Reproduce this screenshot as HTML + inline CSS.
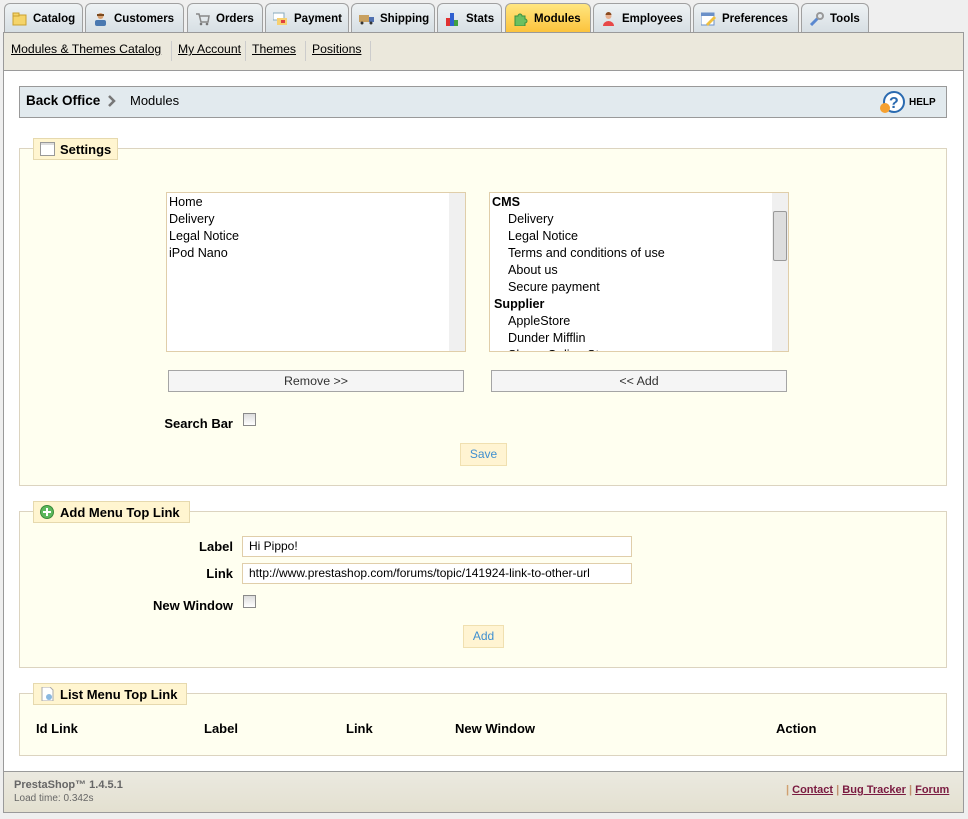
<!DOCTYPE html>
<html><head><meta charset="utf-8">
<style>
*{box-sizing:border-box;margin:0;padding:0}
body{width:968px;height:819px;background:#efefef;font-family:"Liberation Sans",Arial,sans-serif;font-size:12px;color:#000;position:relative;overflow:hidden}
.abs{position:absolute}
.tab{position:absolute;top:3px;height:30px;border:1px solid #a0a0a0;border-bottom:none;border-radius:6px 6px 0 0;background:linear-gradient(#eef2f4,#d6dee3);font-weight:bold;font-size:11.5px;line-height:30px;padding-left:28px;white-space:nowrap}
.tab .ic{position:absolute;left:7px;top:8px;width:15px;height:14px}
.tab.on{background:linear-gradient(#ffe680,#fcc23a);}
#main{position:absolute;left:3px;top:32px;width:961px;height:781px;border:1px solid #9a9a9a;background:#fff}
#sub{position:absolute;left:0;top:0;width:959px;height:38px;background:#ebe8dc;border-bottom:1px solid #9a9a9a}
#sub a{position:absolute;top:9px;color:#000;text-decoration:underline;font-size:12.2px}
.sep{position:absolute;top:8px;width:1px;height:20px;background:#ccc}
fieldset{position:absolute;border:1px solid #dcd4c0;background:#fffff0}
.lg{position:absolute;height:22px;background:#fff5d0;border:1px solid #e6d9ae;font-weight:bold;font-size:13px;line-height:21px;padding-left:26px}
.lg .ic{position:absolute;left:6px;top:3px;width:15px;height:14px}
.sel{position:absolute;background:#fff;border:1px solid #e0ceaa;font-size:12.6px;line-height:17px;overflow:hidden}
.sb{position:absolute;right:0;top:0;width:16px;height:100%;background:#f0f0f0}
.btn{position:absolute;border:1px solid #a5a5a5;background:#f5f5f5;text-align:center;font-size:12.4px;line-height:21px;color:#333}
.sbtn{position:absolute;background:#fff4d2;border:1px solid #f0e0b0;color:#3f8fd0;text-align:center;font-size:12px;line-height:21px}
.lbl{position:absolute;font-weight:bold;font-size:13px;text-align:right}
.cb{position:absolute;width:13px;height:13px;border:1px solid #8a8a8a;background:linear-gradient(#ddd,#fff)}
.inp{position:absolute;height:21px;border:1px solid #e0ceaa;background:#fff;font-size:12px;line-height:19px;padding-left:6px}
.th{position:absolute;top:722px;font-weight:bold;font-size:13px;line-height:14px}
</style></head><body>

<div class="tab" style="left:4px;width:79px"><svg class="ic" viewBox="0 0 15 14"><rect x="1" y="3" width="13" height="10" fill="#f5d46a" stroke="#c9a030"/><rect x="1" y="1" width="6" height="3" fill="#f5d46a" stroke="#c9a030"/></svg>Catalog</div>
<div class="tab" style="left:85px;width:99px"><svg class="ic" viewBox="0 0 15 14"><circle cx="7.5" cy="4" r="3" fill="#d9a070"/><path d="M4 2h7v2H4z" fill="#7a4a20"/><rect x="2" y="8" width="11" height="6" rx="2" fill="#4a78b0"/></svg>Customers</div>
<div class="tab" style="left:187px;width:76px"><svg class="ic" viewBox="0 0 15 14"><path d="M1 2h3l2 8h7l1-6H5" fill="none" stroke="#888" stroke-width="1.5"/><circle cx="6" cy="12" r="1.3" fill="#777"/><circle cx="12" cy="12" r="1.3" fill="#777"/></svg>Orders</div>
<div class="tab" style="left:265px;width:84px"><svg class="ic" viewBox="0 0 15 14"><rect x="0" y="1" width="11" height="7" fill="#fff" stroke="#8ab"/><rect x="4" y="6" width="10" height="7" fill="#f7d070"/><rect x="8" y="8" width="4" height="3" fill="#e04040"/></svg>Payment</div>
<div class="tab" style="left:351px;width:84px"><svg class="ic" viewBox="0 0 15 14"><rect x="0" y="3" width="10" height="7" fill="#c8a060"/><rect x="10" y="5" width="5" height="5" fill="#5070b0"/><circle cx="3" cy="11" r="1.5" fill="#333"/><circle cx="12" cy="11" r="1.5" fill="#333"/></svg>Shipping</div>
<div class="tab" style="left:437px;width:65px"><svg class="ic" viewBox="0 0 15 14"><rect x="1" y="6" width="4" height="8" fill="#e03030"/><rect x="5" y="1" width="4" height="13" fill="#3060d0"/><rect x="9" y="8" width="4" height="6" fill="#40a040"/></svg>Stats</div>
<div class="tab on" style="left:505px;width:86px"><svg class="ic" viewBox="0 0 15 14"><path d="M2 4h3a2 2 0 1 1 4 0h3v3a2 2 0 1 1 0 4v3H2z" fill="#6cc060" stroke="#3a9040"/></svg>Modules</div>
<div class="tab" style="left:593px;width:98px"><svg class="ic" viewBox="0 0 15 14"><circle cx="7.5" cy="4" r="3" fill="#e8b090"/><path d="M4.5 3a3 3 0 0 1 6 0z" fill="#8a4a20"/><path d="M2 14a5.5 5 0 0 1 11 0z" fill="#e84848"/></svg>Employees</div>
<div class="tab" style="left:693px;width:106px"><svg class="ic" viewBox="0 0 15 14"><rect x="0" y="1" width="13" height="12" fill="#fff" stroke="#6a90c8"/><rect x="0" y="1" width="13" height="3" fill="#6a90c8"/><path d="M5 12l8-8 2 2-8 8z" fill="#f0c040"/></svg>Preferences</div>
<div class="tab" style="left:801px;width:68px"><svg class="ic" viewBox="0 0 15 14"><path d="M2 13l7-7" stroke="#5a88d0" stroke-width="3"/><circle cx="11" cy="4" r="3" fill="none" stroke="#999" stroke-width="2"/></svg>Tools</div>

<div id="main">
 <div id="sub">
  <a style="left:7px">Modules &amp; Themes Catalog</a><div class="sep" style="left:167px"></div>
  <a style="left:174px">My Account</a><div class="sep" style="left:241px"></div>
  <a style="left:248px">Themes</a><div class="sep" style="left:301px"></div>
  <a style="left:308px">Positions</a><div class="sep" style="left:366px"></div>
 </div>
</div>

<div class="abs" style="left:19px;top:86px;width:928px;height:32px;background:#e2eaee;border:1px solid #999"></div>
<div class="abs" style="left:26px;top:93px;font-size:13.5px;font-weight:bold">Back Office</div>
<svg class="abs" style="left:107px;top:94px" width="10" height="14" viewBox="0 0 10 14"><path d="M2 2l5 5-5 5" fill="none" stroke="#777" stroke-width="2.5"/></svg>
<div class="abs" style="left:130px;top:93px;font-size:13px">Modules</div>
<svg class="abs" style="left:879px;top:91px" width="28" height="24" viewBox="0 0 28 24"><circle cx="15" cy="11" r="10" fill="#fff" stroke="#2a6ab0" stroke-width="2"/><text x="10" y="17" font-size="16" font-weight="bold" fill="#2a6ab0" font-family="Liberation Sans">?</text><circle cx="6" cy="17" r="5" fill="#f5a030"/></svg>
<div class="abs" style="left:909px;top:97px;font-size:10px;font-weight:bold">HELP</div>

<fieldset style="left:19px;top:148px;width:928px;height:338px"></fieldset>
<div class="lg" style="left:33px;top:138px;width:85px"><svg class="ic" viewBox="0 0 15 14"><rect x="0.5" y="0.5" width="14" height="13" fill="#fff" stroke="#999"/><rect x="1" y="1" width="13" height="2" fill="#ddd"/></svg>Settings</div>

<div class="sel" style="left:166px;top:192px;width:300px;height:160px;padding:1px 2px"><div>Home</div><div>Delivery</div><div>Legal Notice</div><div>iPod Nano</div><div class="sb"></div></div>
<div class="sel" style="left:489px;top:192px;width:300px;height:160px;padding:1px 2px">
<div style="font-weight:bold">CMS</div><div style="padding-left:16px">Delivery</div><div style="padding-left:16px">Legal Notice</div><div style="padding-left:16px">Terms and conditions of use</div><div style="padding-left:16px">About us</div><div style="padding-left:16px">Secure payment</div><div style="font-weight:bold;padding-left:2px">Supplier</div><div style="padding-left:16px">AppleStore</div><div style="padding-left:16px">Dunder Mifflin</div><div style="padding-left:16px">Shoes Online Store</div>
<div class="sb"><div style="position:absolute;left:1px;top:18px;width:14px;height:50px;background:#ddd;border:1px solid #999;border-radius:2px"></div></div></div>

<div class="btn" style="left:168px;top:370px;width:296px;height:22px">Remove &gt;&gt;</div>
<div class="btn" style="left:491px;top:370px;width:296px;height:22px">&lt;&lt; Add</div>
<div class="lbl" style="left:130px;top:416px;width:103px">Search Bar</div>
<div class="cb" style="left:243px;top:413px"></div>
<div class="sbtn" style="left:460px;top:443px;width:47px;height:23px">Save</div>

<fieldset style="left:19px;top:511px;width:928px;height:157px"></fieldset>
<div class="lg" style="left:33px;top:501px;width:157px"><svg class="ic" viewBox="0 0 15 14"><circle cx="7" cy="7" r="6.5" fill="#5cb85c" stroke="#3a8a3a"/><path d="M7 3v8M3 7h8" stroke="#fff" stroke-width="2"/></svg>Add Menu Top Link</div>
<div class="lbl" style="left:130px;top:539px;width:103px">Label</div>
<div class="inp" style="left:242px;top:536px;width:390px">Hi Pippo!</div>
<div class="lbl" style="left:130px;top:566px;width:103px">Link</div>
<div class="inp" style="left:242px;top:563px;width:390px">http://www.prestashop.com/forums/topic/141924-link-to-other-url</div>
<div class="lbl" style="left:100px;top:598px;width:133px">New Window</div>
<div class="cb" style="left:243px;top:595px"></div>
<div class="sbtn" style="left:463px;top:625px;width:41px;height:23px">Add</div>

<fieldset style="left:19px;top:693px;width:928px;height:63px"></fieldset>
<div class="lg" style="left:33px;top:683px;width:154px"><svg class="ic" viewBox="0 0 15 14"><path d="M2 0h8l3 3v11H2z" fill="#fff" stroke="#aaa"/><circle cx="9" cy="10" r="3" fill="#8ab8e0"/></svg>List Menu Top Link</div>
<div class="th" style="left:36px">Id Link</div>
<div class="th" style="left:204px">Label</div>
<div class="th" style="left:346px">Link</div>
<div class="th" style="left:455px">New Window</div>
<div class="th" style="left:776px">Action</div>

<div class="abs" style="left:4px;top:771px;width:959px;height:41px;background:linear-gradient(#ebe9e0,#e3e0d0);border-top:1px solid #9a9a9a"></div>
<div class="abs" style="left:14px;top:779px;font-size:11px;font-weight:bold;color:#666">PrestaShop™ 1.4.5.1</div>
<div class="abs" style="left:14px;top:793px;font-size:10px;color:#666">Load time: 0.342s</div>
<div class="abs" style="left:786px;top:784px;font-size:11px;font-weight:bold;color:#c09070"><span style="color:#d0a070">|</span> <u style="color:#7a1a40">Contact</u> | <u style="color:#7a1a40">Bug Tracker</u> | <u style="color:#7a1a40">Forum</u></div>
</body></html>
